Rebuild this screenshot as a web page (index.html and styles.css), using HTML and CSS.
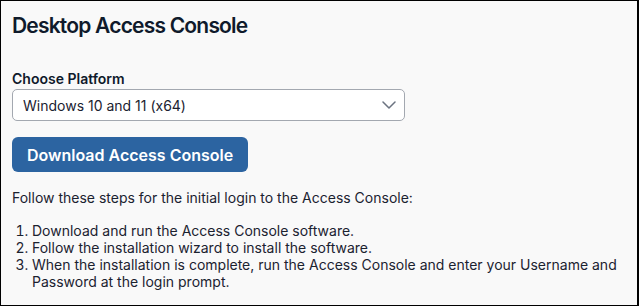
FILE: index.html
```html
<!DOCTYPE html>
<html lang="en">
<head>
    <meta charset="UTF-8">
    <meta name="viewport" content="width=device-width, initial-scale=1.0">
    <title>Desktop Access Console</title>
    <link rel="stylesheet" href="styles.css">
</head>
<body>
    <main class="console-panel">
        <h1>Desktop Access Console</h1>

        <label class="field-label" for="platform">Choose Platform</label>
        <div class="select-wrap">
            <select id="platform" class="platform-select">
                <option>Windows 10 and 11 (x64)</option>
                <option>macOS</option>
            </select>
            <svg class="chevron" width="14" height="8" viewBox="0 0 14 8">
                <path d="M1 1l6 6 6-6" fill="none" stroke="#6b7380" stroke-width="1.5" stroke-linecap="round" stroke-linejoin="round"/>
            </svg>
        </div>

        <button class="download-btn">Download Access Console</button>

        <p class="intro">Follow these steps for the initial login to the Access Console:</p>
        <ol class="steps">
            <li>Download and run the Access Console software.</li>
            <li>Follow the installation wizard to install the software.</li>
            <li>When the installation is complete, run the Access Console and enter your Username and Password at the login prompt.</li>
        </ol>
    </main>
</body>
</html>
```

FILE: styles.css
```css
* {
    box-sizing: border-box;
}

body {
    margin: 0;
    font-family: Inter, "Noto Sans", sans-serif;
    color: #1b2230;
}

.console-panel {
    width: 639px;
    height: 306px;
    background: #f9f9f9;
    border: 1px solid #000;
    border-right-width: 2px;
    padding: 12px 11px;
}

h1 {
    margin: 0;
    font-size: 21px;
    font-weight: 600;
    letter-spacing: -0.8px;
    line-height: 26px;
    color: #0f1a2b;
}

.field-label {
    display: block;
    margin-top: 31px;
    font-size: 14px;
    font-weight: 600;
    line-height: 17px;
    color: #0f1a2b;
}

.select-wrap {
    position: relative;
    width: 393px;
    margin-top: 2px;
}

.platform-select {
    appearance: none;
    width: 100%;
    height: 32px;
    padding: 0 10px;
    font-family: inherit;
    font-size: 14px;
    color: #1b2230;
    background: #fff;
    border: 1px solid #a3a8b0;
    border-radius: 5px;
}

.chevron {
    position: absolute;
    right: 9px;
    top: 12px;
    pointer-events: none;
}

.download-btn {
    display: block;
    margin-top: 16px;
    height: 35px;
    padding: 0 15px;
    font-family: inherit;
    font-size: 16px;
    font-weight: 600;
    color: #fff;
    background: #2c64a1;
    border: none;
    border-radius: 6px;
    cursor: pointer;
}

.intro {
    margin: 17px 0 0;
    font-size: 14px;
    line-height: 17px;
}

.steps {
    margin: 16px 0 0;
    padding-left: 20px;
    font-size: 14px;
    line-height: 17px;
}
```
